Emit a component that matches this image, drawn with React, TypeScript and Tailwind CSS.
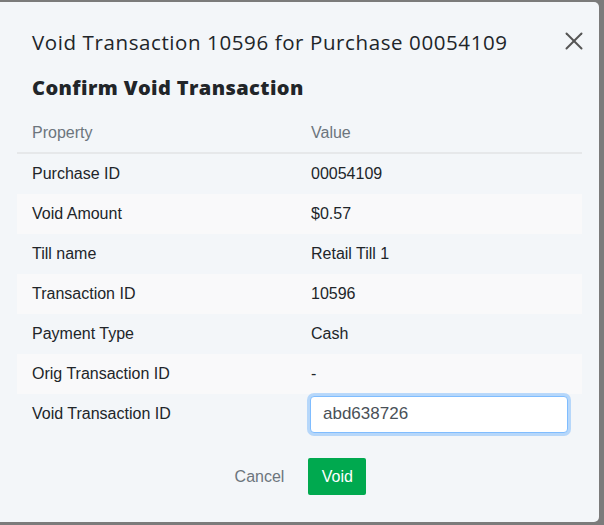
import { X } from "lucide-react";

const ROWS: { label: string; value: string }[] = [
  { label: "Purchase ID", value: "00054109" },
  { label: "Void Amount", value: "$0.57" },
  { label: "Till name", value: "Retail Till 1" },
  { label: "Transaction ID", value: "10596" },
  { label: "Payment Type", value: "Cash" },
  { label: "Orig Transaction ID", value: "-" },
];

export default function App() {
  return (
    <div className="h-[525px] w-[604px] overflow-hidden bg-[#7b7b7b] pt-[2px]">
      <div
        className="flex h-[520px] w-[599px] flex-col rounded-r-[5px] bg-[#f3f6f9] text-[#212529]"
        style={{ fontFamily: '"Liberation Sans", Arial, sans-serif' }}
      >
        {/* header */}
        <div className="flex items-start justify-between pl-[32px] pr-[10px] pt-[27px]">
          <h2
            className="text-[20.5px] font-medium leading-[26px] tracking-[0.6px]"
            style={{ fontFamily: '"Open Sans", sans-serif' }}
          >
            Void Transaction 10596 for Purchase 00054109
          </h2>
          <X className="-mt-[3px] h-[30px] w-[30px] text-[#555]" strokeWidth={1.6} />
        </div>

        <h3
          className="pl-[32px] pt-[19px] text-[20px] font-extrabold leading-[26px] tracking-[0.4px]"
          style={{ fontFamily: '"Open Sans", sans-serif' }}
        >
          Confirm Void Transaction
        </h3>

        {/* table */}
        <div className="mx-[17px] mt-[13px] text-[16px]">
          <div className="flex h-[40px] items-center border-b-2 border-[#e6e8ea] text-[#6c757d]">
            <div className="w-[294px] pl-[15px]">Property</div>
            <div>Value</div>
          </div>
          {ROWS.map((r, i) => (
            <div
              key={r.label}
              className={`flex h-[40px] items-center ${i % 2 === 1 ? "bg-[#f9f9fa]" : ""}`}
            >
              <div className="w-[294px] pl-[15px]">{r.label}</div>
              <div>{r.value}</div>
            </div>
          ))}
          <div className="flex h-[40px] items-center">
            <div className="w-[293px] pl-[15px]">Void Transaction ID</div>
            <input
              defaultValue="abd638726"
              className="h-[37px] w-[258px] rounded-[4px] border border-[#80bdff] bg-white px-[12px] text-[17px] text-[#495057] shadow-[0_0_0_3px_rgba(0,123,255,0.25)] outline-none"
            />
          </div>
        </div>

        {/* footer */}
        <div className="mt-[24px] flex items-center justify-center gap-[24px] pl-[2px]">
          <button className="text-[16px] text-[#6c757d]">Cancel</button>
          <button className="h-[37px] w-[58px] rounded-[2px] bg-[#00a94f] text-[16px] text-white">
            Void
          </button>
        </div>
      </div>
    </div>
  );
}
